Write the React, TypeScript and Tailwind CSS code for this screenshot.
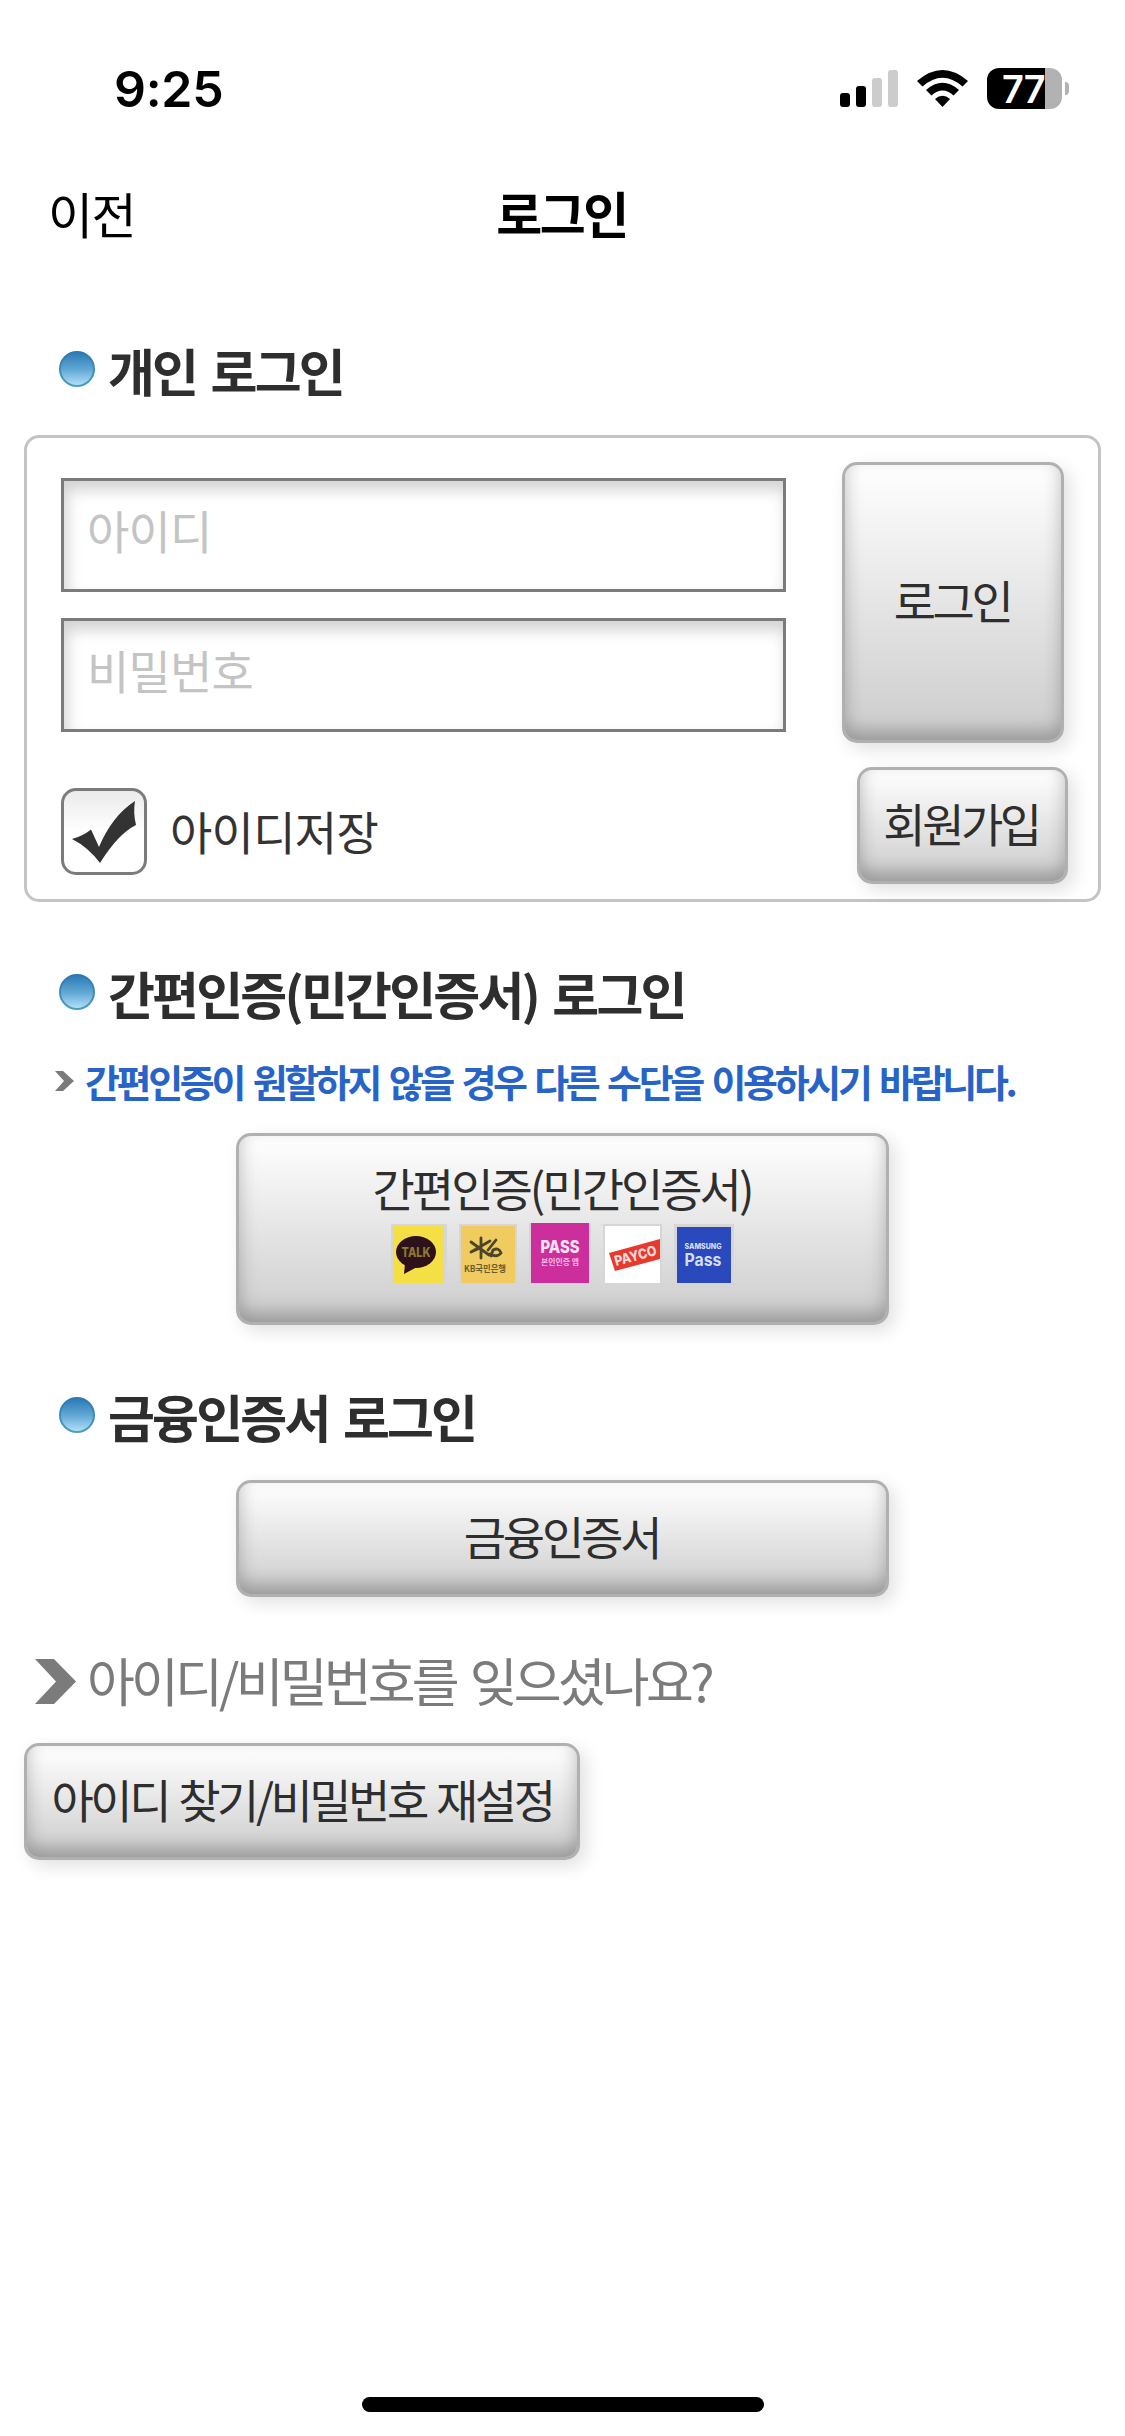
import React, { useState } from 'react';
import clsx from 'clsx';

const buttonStyle =
  'rounded-[15px] border-[3px] border-[#b0b0b0] bg-linear-to-b from-white to-[#cccccc] text-[46px] leading-none text-[#2e2e2e] shadow-[6px_6px_18px_rgba(0,0,0,0.12),inset_0_-9px_18px_rgba(0,0,0,0.25)]';

const inputStyle =
  'block h-[114px] w-[725px] border-[3px] border-[#7b7b7b] bg-white pl-[23px] pb-[13px] text-[46px] tracking-[-0.8px] text-[#2e2e2e] outline-none placeholder:text-[#c4c4c4] shadow-[inset_3px_9px_15px_rgba(0,0,0,0.18)]';

function StatusBar() {
  return (
    <div className="flex h-[141px] items-start justify-between pl-[114px] pr-[56px] pt-[68px]">
      <span className="font-['Inter'] text-[50px] font-semibold leading-[42px] tracking-[-0.3px] text-black">9:25</span>
      <div className="flex h-[41px] items-center">
        <svg className="h-[41px] w-[58px]" viewBox="0 0 58 41">
          <rect x="0" y="25" width="10" height="14" rx="3" fill="#000" />
          <rect x="16" y="18" width="10" height="21" rx="3" fill="#000" />
          <rect x="32" y="10" width="10" height="29" rx="3" fill="#ccc" />
          <rect x="48" y="2" width="10" height="37" rx="3" fill="#ccc" />
        </svg>
        <svg className="ml-[19px] h-[41px] w-[51px]" viewBox="0 0 51 41">
          <path d="M0 13 Q25.5 -9 51 13 L45.5 18.500 Q25.500 1 5.500 18.500 Z" />
          <path d="M9 22 Q25.500 7.500 42 22 L36.500 27.500 Q25.500 17.500 14.500 27.500 Z" />
          <path d="M18 31 Q25.500 24.500 33 31 L25.500 39 Z" />
        </svg>
        <div className="ml-[19px] flex h-[41px] w-[75px] items-center rounded-[12px] bg-linear-to-r from-black from-[58px] to-[#b2b2b2] to-[58px] pl-[15px]">
          <span className="font-['Inter'] text-[38px] font-semibold leading-none tracking-[-1px] text-white">77</span>
        </div>
        <div className="ml-[3px] h-[13px] w-[4px] rounded-r-full bg-[#b2b2b2]" />
      </div>
    </div>
  );
}

function SectionTitle({ children, className }: { children: React.ReactNode; className?: string }) {
  return (
    <h2 className={clsx('flex h-[54px] items-center pl-[59px]', className)}>
      <svg className="mr-[13px] mb-[7px] h-[36px] w-[36px]" viewBox="0 0 36 36">
        <defs>
          <linearGradient id="dot" x1="0" y1="0" x2="0" y2="1">
            <stop offset="0" stopColor="#2b78b4" />
            <stop offset="0.5" stopColor="#5fa6d3" />
            <stop offset="1" stopColor="#b5e2fb" />
          </linearGradient>
          <linearGradient id="rim" x1="0" y1="0" x2="0" y2="1">
            <stop offset="0" stopColor="#2b78b4" />
            <stop offset="1" stopColor="#4a9fbd" />
          </linearGradient>
        </defs>
        <circle cx="18" cy="18" r="17" fill="url(#dot)" stroke="url(#rim)" strokeWidth="2" />
      </svg>
      <span className="pb-1 text-[51px] font-bold leading-[54px] tracking-[-2.8px] text-[#2e2e2e] [word-spacing:5.5px]">{children}</span>
    </h2>
  );
}

function AuthLogos() {
  return (
    <div className="flex items-end leading-none tracking-normal">
      <svg className="h-[62px] w-[56px]" viewBox="0 0 56 62">
        <rect width="56" height="62" fill="#d6d6d6" />
        <rect x="2" y="2" width="51" height="57" fill="#f4df45" />
        <ellipse cx="25" cy="28" rx="20" ry="16" fill="#2d121c" />
        <path d="M14 39 L13 50 L26 43 Z" fill="#2d121c" />
        <text x="25" y="33" textAnchor="middle" textLength="29" lengthAdjust="spacingAndGlyphs" fontFamily="Inter" fontSize="13" fontWeight="800" fill="#8d7a2c">TALK</text>
      </svg>
      <svg className="ml-[12px] h-[62px] w-[58px]" viewBox="0 0 58 62">
        <rect width="58" height="62" fill="#d6d6d6" />
        <rect x="2" y="2" width="54" height="57" fill="#f0cb60" />
        <g stroke="#4c4629" strokeWidth="2.800" fill="none" strokeLinecap="round">
          <path d="M22 14 V34 M12 18 L30 31 M31 17 L12 28 M12 28 L21 24" />
          <path d="M37 16 L29 26 M31 30 Q38 34 42 29 Q40 23 34 26 L32 32" />
        </g>
        <text x="26" y="48" textAnchor="middle" textLength="42" lengthAdjust="spacingAndGlyphs" fontFamily="Noto Sans CJK KR" fontSize="9" fontWeight="700" fill="#6b5c30">KB국민은행</text>
      </svg>
      <svg className="ml-[12px] h-[63px] w-[62px]" viewBox="0 0 62 63">
        <rect width="62" height="63" fill="#d6d6d6" />
        <rect x="2" y="0" width="58" height="60" fill="#cc2e9b" />
        <text x="31" y="30" textAnchor="middle" textLength="39" lengthAdjust="spacingAndGlyphs" fontFamily="Inter" fontSize="17" fontWeight="800" fill="#fbe3f3">PASS</text>
        <text x="31" y="42" textAnchor="middle" textLength="38" lengthAdjust="spacingAndGlyphs" fontFamily="Noto Sans CJK KR" fontSize="8" fontWeight="700" fill="#f3bfe2">본인인증 앱</text>
      </svg>
      <svg className="ml-[12px] h-[62px] w-[59px]" viewBox="0 0 59 62">
        <rect width="59" height="62" fill="#d6d6d6" />
        <rect x="2" y="2" width="55" height="57" fill="#fff" />
        <path d="M6 29 L57 15 V35 L12 47 Z" fill="#e63a2e" />
        <text x="13" y="42" transform="rotate(-15 13 42)" textLength="43" lengthAdjust="spacingAndGlyphs" fontFamily="Inter" fontSize="14" fontWeight="800" fill="#fbdcd8">PAYCO</text>
      </svg>
      <svg className="ml-[12px] h-[62px] w-[60px]" viewBox="0 0 60 62">
        <rect width="60" height="62" fill="#d6d6d6" />
        <rect x="3" y="3" width="54" height="56" fill="#2949bd" />
        <text x="29" y="25" textAnchor="middle" textLength="37" lengthAdjust="spacingAndGlyphs" fontFamily="Inter" fontSize="7" fontWeight="800" fill="#d5ddf6">SAMSUNG</text>
        <text x="29" y="42" textAnchor="middle" textLength="37" lengthAdjust="spacingAndGlyphs" fontFamily="Inter" fontSize="17" fontWeight="700" fill="#d5ddf6">Pass</text>
      </svg>
    </div>
  );
}

function App() {
  const [userId, setUserId] = useState('');
  const [password, setPassword] = useState('');
  const [saveId, setSaveId] = useState(true);

  return (
    <div className="flex h-[2436px] w-[1125px] flex-col bg-white font-['Noto_Sans_CJK_KR',sans-serif]">
      <StatusBar />

      <header className="grid h-[142px] grid-cols-3 items-center pl-[48px] pr-[50px] text-[50px] leading-none text-black">
        <button className="justify-self-start text-[49px] tracking-[-1.5px]">이전</button>
        <h1 className="justify-self-center font-bold tracking-[-2.5px]">로그인</h1>
      </header>

      <main className="flex flex-1 flex-col">
        <SectionTitle className="mt-[62px]">개인 로그인</SectionTitle>

        {/* ID / password login */}
        <form
          className="mx-6 mt-[36px] flex h-[467px] justify-between rounded-[15px] border-[3px] border-[#c4c4c4] pl-[34px] pr-[30px]"
          onSubmit={e => e.preventDefault()}
        >
          <div className="flex flex-col pt-10">
            <input className={inputStyle} placeholder="아이디" value={userId} onChange={e => setUserId(e.target.value)} />
            <input
              className={clsx(inputStyle, 'mt-[26px]')}
              type="password"
              placeholder="비밀번호"
              value={password}
              onChange={e => setPassword(e.target.value)}
            />
            <label className="mt-[56px] flex h-[87px] items-center">
              <input type="checkbox" className="sr-only" checked={saveId} onChange={() => setSaveId(s => !s)} />
              <span className="flex h-[87px] w-[86px] items-center justify-center rounded-[15px] border-[3px] border-[#7b7b7b] bg-linear-to-b from-[#ebebeb] to-white to-50%">
                {saveId && (
                  <svg className="h-[81px] w-[80px]" viewBox="0 0 80 81">
                    <path d="M8 48 Q19 45 27 38.500 L35 56 Q48 25 71 10 Q69 22 72 34 Q54 43 36 72 Q24 56 8 48 Z" fill="#333" />
                  </svg>
                )}
              </span>
              <span className="ml-[23px] pb-[4px] text-[46px] leading-none tracking-[-0.7px] text-[#333]">아이디저장</span>
            </label>
          </div>
          <div className="flex flex-col items-end pt-6">
            <button className={clsx(buttonStyle, 'mr-1 h-[281px] w-[222px] pb-[8px] pr-[2px] tracking-[-3.5px]')}>로그인</button>
            <button className={clsx(buttonStyle, 'mt-6 h-[117px] w-[211px] pb-[7px] pr-[3px] tracking-[-3.5px]')}>회원가입</button>
          </div>
        </form>

        {/* Simple authentication */}
        <SectionTitle className="mt-[66px]">간편인증(민간인증서) 로그인</SectionTitle>
        <p className="mt-[30px] flex h-[60px] items-center pl-[55px] text-[38px] font-bold leading-none tracking-[-3.35px] text-[#2864c8] [word-spacing:4.3px]">
          <svg className="mr-[11px] mb-[3px] h-[20px] w-[19px] shrink-0" viewBox="0 0 19 20">
            <path d="M0 0 H8 L19 10 L8 20 H0 L9 10 Z" fill="#7b7b7b" />
          </svg>
          <span className="whitespace-nowrap pb-[3px]">간편인증이 원할하지 않을 경우 다른 수단을 이용하시기 바랍니다.</span>
        </p>
        <button
          className={clsx(buttonStyle, 'ml-[236px] mt-[21px] flex h-[192px] w-[653px] flex-col items-center pt-[28px] tracking-[-3px]')}
        >
          <span className="mb-[13px] pr-[1px]">간편인증(민간인증서)</span>
          <AuthLogos />
        </button>

        {/* Financial certificate */}
        <SectionTitle className="mt-[66px]">금융인증서 로그인</SectionTitle>
        <button className={clsx(buttonStyle, 'ml-[236px] mt-[35px] h-[117px] w-[653px] pb-[8px] pr-[2px] tracking-[-3.2px]')}>금융인증서</button>

        <p className="mt-[54px] flex h-[60px] items-center pl-[35px] text-[52px] leading-none tracking-[-3.8px] text-[#7b7b7b] [word-spacing:6px]">
          <svg className="mr-[11px] h-[45px] w-[41px]" viewBox="0 0 41 45">
            <path d="M0 0 H19 L41 22.500 L19 45 H0 L21 22.500 Z" fill="#7b7b7b" />
          </svg>
          <span className="pb-[2px]">아이디/비밀번호를 잊으셨나요?</span>
        </p>
        <button
          className={clsx(buttonStyle, 'ml-6 mt-[32px] h-[117px] w-[556px] whitespace-nowrap pb-[8px] tracking-[-3.5px] [word-spacing:3.5px]')}
        >
          아이디 찾기/비밀번호 재설정
        </button>
      </main>

      <div className="mb-6 ml-[362px] h-[15px] w-[402px] rounded-full bg-black" />
    </div>
  );
}

export default App;
